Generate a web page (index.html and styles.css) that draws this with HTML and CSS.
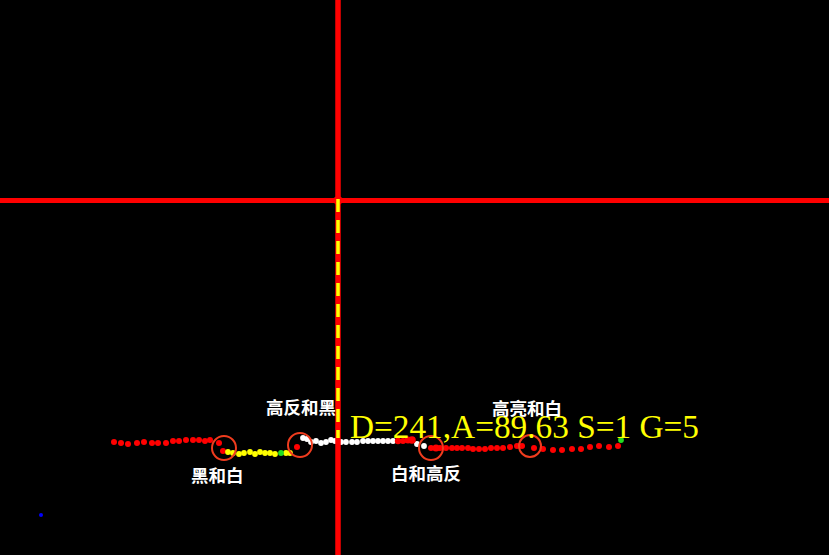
FILE: index.html
```html
<!DOCTYPE html>
<html lang="zh">
<head>
<meta charset="utf-8">
<title>Track</title>
<link rel="stylesheet" href="styles.css">
</head>
<body>
<div class="canvas">
<svg class="scene" width="829" height="555" viewBox="0 0 829 555">
  <g class="red">
    <circle cx="114" cy="442" r="3"/><circle cx="121" cy="443" r="3"/><circle cx="128" cy="444" r="3"/>
    <circle cx="137" cy="443" r="3"/><circle cx="144" cy="442" r="3"/><circle cx="152" cy="443" r="3"/>
    <circle cx="158" cy="443" r="3"/><circle cx="166" cy="443" r="3"/><circle cx="173" cy="441" r="3"/>
    <circle cx="179" cy="441" r="3"/><circle cx="186" cy="440" r="3"/><circle cx="193" cy="440" r="3"/>
    <circle cx="199" cy="440" r="3"/><circle cx="205" cy="441" r="3"/><circle cx="210" cy="440" r="3"/>
    <circle cx="219" cy="443" r="3"/><circle cx="223" cy="451" r="3"/>
    <circle cx="297" cy="447" r="3"/>
  </g>
  <g class="yellow">
    <circle cx="228" cy="452" r="2.9"/><circle cx="233" cy="453" r="2.9"/><circle cx="239" cy="454" r="2.9"/>
    <circle cx="244" cy="453" r="2.9"/><circle cx="250" cy="452" r="2.9"/><circle cx="255" cy="454" r="2.9"/>
    <circle cx="260" cy="452" r="2.9"/><circle cx="265" cy="453" r="2.9"/><circle cx="270" cy="453" r="2.9"/>
    <circle cx="275" cy="454" r="2.9"/><circle cx="286" cy="453" r="2.9"/><circle cx="290" cy="453" r="2.9"/>
  </g>
  <g class="green">
    <circle cx="281" cy="453" r="2.9"/>
    <circle cx="621" cy="440" r="2.9"/>
  </g>
  <g class="white">
    <circle cx="303" cy="438" r="2.9"/><circle cx="307" cy="439" r="2.9"/><circle cx="311" cy="442" r="2.9"/>
    <circle cx="316" cy="441" r="2.9"/><circle cx="321" cy="443" r="2.9"/><circle cx="326" cy="442" r="2.9"/>
    <circle cx="331" cy="440" r="2.9"/><circle cx="335" cy="441" r="2.9"/><circle cx="341" cy="442" r="2.9"/>
    <circle cx="346" cy="442" r="2.9"/><circle cx="352" cy="442" r="2.9"/><circle cx="357" cy="442" r="2.9"/>
    <circle cx="363" cy="441" r="2.9"/><circle cx="368" cy="441" r="2.9"/><circle cx="373" cy="441" r="2.9"/>
    <circle cx="378" cy="441" r="2.9"/><circle cx="383" cy="441" r="2.9"/><circle cx="388" cy="441" r="2.9"/>
    <circle cx="393" cy="441" r="2.9"/>
    <circle cx="417" cy="444" r="2.9"/><circle cx="424" cy="446" r="2.9"/>
  </g>
  <g class="red">
    <circle cx="398" cy="441" r="3.2"/><circle cx="403" cy="441" r="3"/><circle cx="408" cy="440" r="3.6"/>
    <circle cx="412" cy="440" r="3.8"/>
    <circle cx="431" cy="448" r="3"/><circle cx="436" cy="448" r="3.6"/><circle cx="440" cy="448" r="3"/>
    <circle cx="446" cy="448" r="3"/><circle cx="452" cy="448" r="3"/><circle cx="457" cy="448" r="3"/>
    <circle cx="462" cy="448" r="3"/><circle cx="468" cy="448" r="3"/><circle cx="473" cy="449" r="3"/>
    <circle cx="479" cy="449" r="3"/><circle cx="485" cy="449" r="3"/><circle cx="491" cy="448" r="3"/>
    <circle cx="497" cy="448" r="3"/><circle cx="503" cy="448" r="3"/><circle cx="510" cy="447" r="3"/>
    <circle cx="517" cy="446" r="3"/><circle cx="522" cy="446" r="3"/><circle cx="534" cy="448" r="3"/>
    <circle cx="543" cy="449" r="3"/><circle cx="553" cy="450" r="3"/><circle cx="562" cy="450" r="3"/>
    <circle cx="572" cy="449" r="3"/><circle cx="581" cy="449" r="3"/><circle cx="590" cy="447" r="3"/>
    <circle cx="599" cy="446" r="3"/><circle cx="609" cy="447" r="3"/><circle cx="618" cy="446" r="3"/>
  </g>
  <circle class="blue" cx="41" cy="515" r="2"/>
  <g class="ring">
    <circle cx="224" cy="448" r="12"/>
    <circle cx="300" cy="445" r="12"/>
    <circle cx="431" cy="448" r="12"/>
    <circle cx="530" cy="446" r="11"/>
  </g>
  <line class="axis" x1="0" y1="200.5" x2="829" y2="200.5"/>
  <line class="axis axis-v" x1="338" y1="0" x2="338" y2="555"/>
  <circle class="hub" cx="338" cy="200.5" r="4.5"/>
  <line class="dash" x1="338" y1="199" x2="338" y2="438"/>
  <text class="reading" x="350" y="438">D=241,A=89.63 S=1 G=5</text>
  <text class="label" x="266" y="414">高反和黑</text>
  <text class="label" x="492" y="415">高亮和白</text>
  <text class="label" x="191" y="482">黑和白</text>
  <text class="label" x="391" y="480">白和高反</text>
</svg>
</div>
</body>
</html>
```
FILE: styles.css
```css
html, body {
  margin: 0;
  padding: 0;
  background: #000;
}
.canvas {
  width: 829px;
  height: 555px;
  background: #000;
  overflow: hidden;
}
.scene {
  display: block;
}
.red { fill: #ff0000; }
.yellow { fill: #ffff00; }
.green { fill: #22dd22; }
.white { fill: #ffffff; }
.blue { fill: #0000ff; }
.ring {
  fill: none;
  stroke: #f03c1e;
  stroke-width: 2;
}
.axis {
  stroke: #ff0000;
  stroke-width: 5;
}
.axis-v {
  stroke-width: 5.5;
}
.hub { fill: #ff0000; }
.dash {
  stroke: #ffff00;
  stroke-width: 3.5;
  stroke-dasharray: 13 8;
}
.reading {
  font-family: "Liberation Serif", "Times New Roman", serif;
  font-size: 33.3px;
  fill: #ffff00;
}
.label {
  font-family: "Noto Sans CJK SC", "Noto Sans", sans-serif;
  font-size: 17.5px;
  font-weight: 700;
  fill: #ffffff;
}
```
